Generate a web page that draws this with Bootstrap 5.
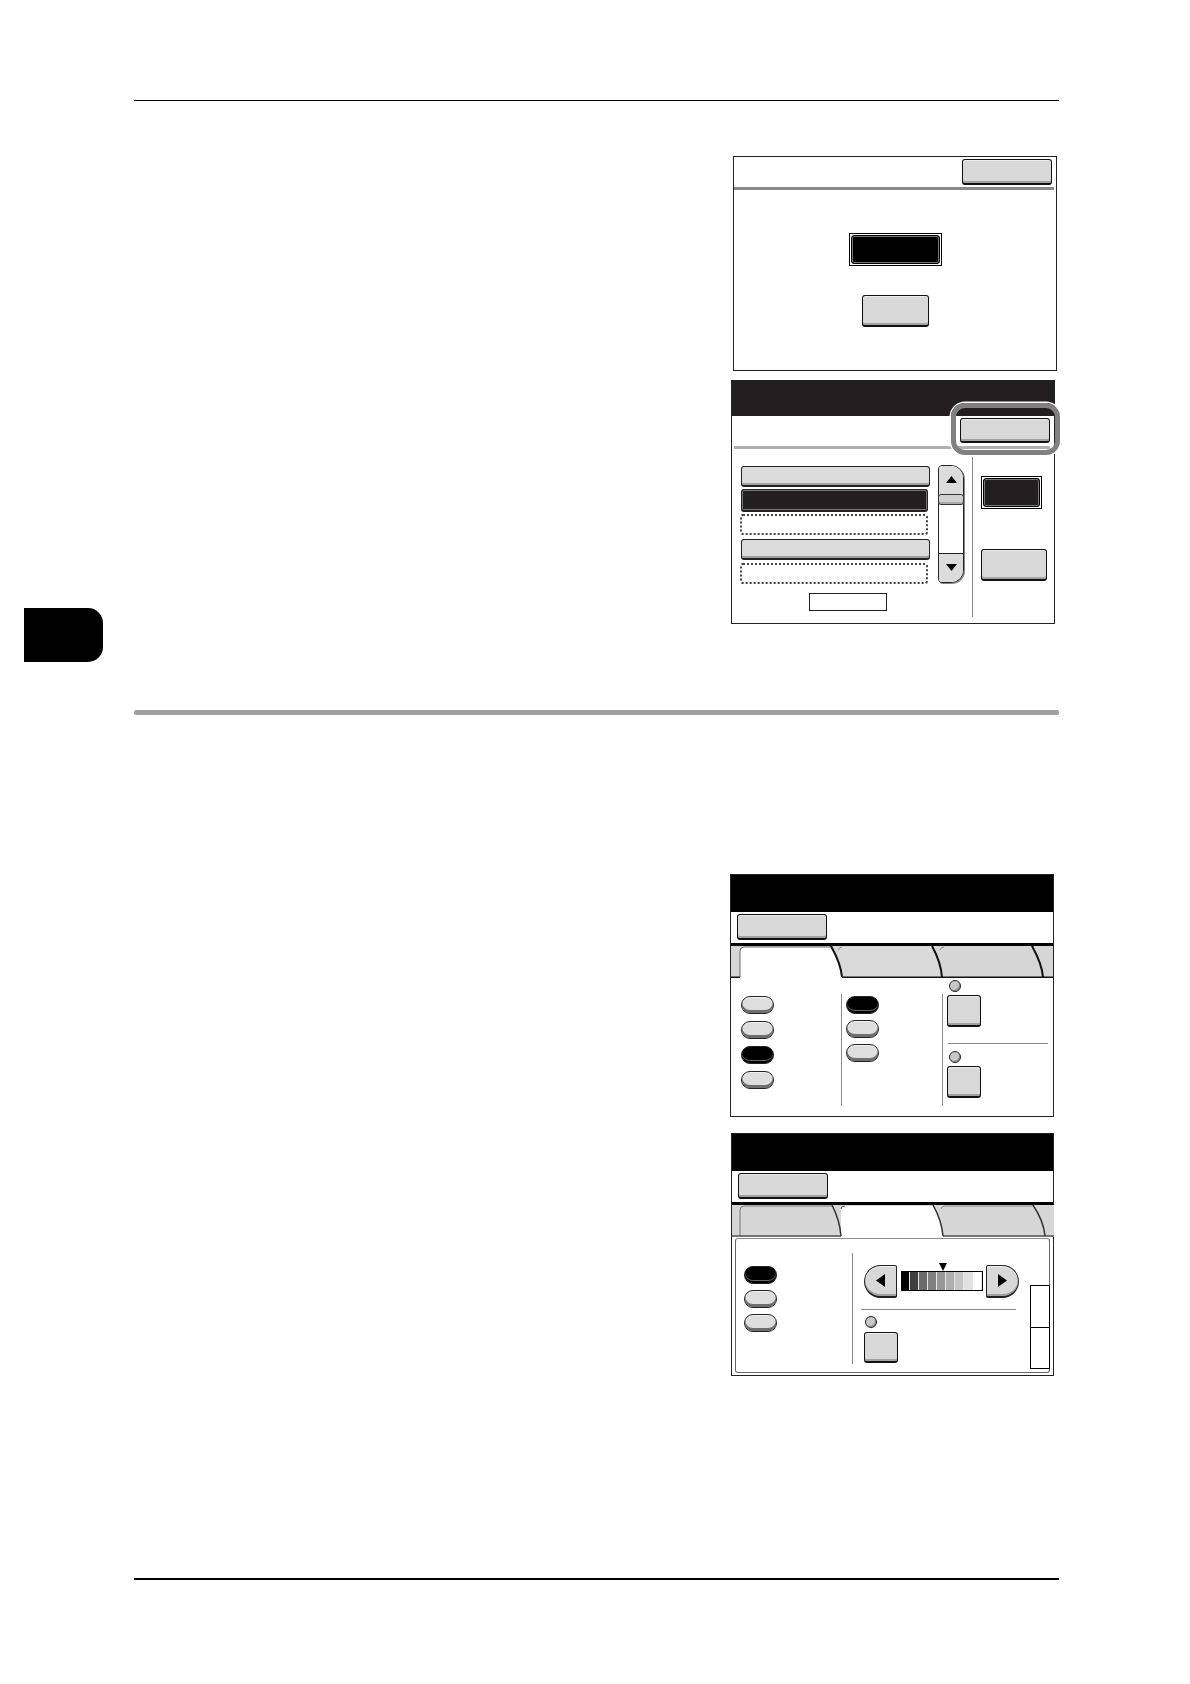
<!DOCTYPE html>
<html lang="en">
<head>
<meta charset="utf-8">
<title>Manual page</title>
<link rel="stylesheet" href="https://cdn.jsdelivr.net/npm/bootstrap@5.3.0/dist/css/bootstrap.min.css">
<style>
body{margin:0;background:#fff;height:1684px;overflow:hidden;font-family:"Liberation Sans",sans-serif}
.gutter{width:134px;padding-left:24px;flex:none}
.thumbtab{width:79px;height:54px;margin-top:607.5px;background:#000;border-radius:0 15px 15px 0}
.sheet{width:925px;flex:none}
.rule-thin{height:1.5px;background:#000}
.rule-top{margin-top:99.5px}
.rule-bottom{margin-top:202px}
.rule-thick{height:5px;margin-top:86.5px;background:#a0a0a0;border-radius:2px}

.screen{position:relative;width:324px;background:#fff;border:1px solid #222;flex:none}
.s1{margin:54.5px 0 0 599px;height:215.5px}
.s2{margin:8.5px 0 0 597px;height:244px}
.s3{margin:159px 0 0 596px;height:243px}
.s4{margin:16px 0 0 597px;width:323px;height:243px}
.s2 .titlebar{height:35px;background:#231f20}
.s3 .titlebar,.s4 .titlebar{height:37px;background:#000}
.s2,.s3,.s4{border-left-width:1.5px}

.uibtn{display:block;padding:0;background:#d8d8d8;border:1.5px solid #111;border-bottom-width:2px;border-radius:3px;box-shadow:inset 0 -2px 0 #a2a2a2,inset 0 1px 0 #ececec}
.w90{width:90px;height:25.5px}
.sepbar{height:3px;background:#8a8a8a}
.s1 .sepbar{margin:2px 2px 0 0}
.s2 .sepbar{background:#b0b0b0;margin:2.5px 4px 0 2px}
.s1-top{padding:2.5px 4px 0 0}
.s2-top{padding:2px 4px 0 0}

.sel{background:#fff;border:1px solid #000;padding:1px}
.sel-in{display:block;width:100%;height:100%;background:#000;border:1px solid #000;border-radius:3px;box-shadow:inset 0 0 0 1px #777}
.s2 .sel-in{background:#231f20}
.sel-s1{width:93px;height:33px;margin-top:43.5px}
.gray-s1{width:67px;height:31.5px;margin-top:29px}

.lst{width:190px;margin-left:8px;margin-top:17px}
.lrow{height:21px;margin-left:1px;width:189px;background:#dcdcdc;border:1.5px solid #222;border-bottom-width:2px;border-radius:3px;box-shadow:inset 0 -2px 0 #a2a2a2}
.lrow-on{width:187px;height:22.5px;margin-top:2.5px;background:#231f20;box-shadow:inset 0 0 0 1px #777}
.lrow-empty{width:188px;margin-left:0;margin-top:2px;background:#fff;border:2px dotted #444;box-shadow:none}
.mt45{margin-top:4px}
.mt4{margin-top:3.5px}
.pagebox{width:78px;height:18px;margin:8.5px 0 0 69px;border:1px solid #222}

.scrl{width:26px;height:118px;margin:16px 0 0 8px;background:#fff;border:1.5px solid #222;border-radius:4px 13px 13px 4px;box-shadow:1px 1px 0 #888}
.scrl-cap{height:28px;background:#dcdcdc;border-radius:3px 12px 0 0}
.scrl-cap-b{height:29px;border-radius:0 0 12px 3px;border-top:1px solid #222}
.scrl-thumb{height:11px;margin:0 -1px;background:#d0d0d0;border:1px solid #333;border-radius:3px;box-shadow:inset 0 -2px 0 #aaa}
.vline{width:1px;background:#888;flex:none}
.v2{height:160px;margin:8.5px 0 0 7.5px}
.rcol{margin-left:8.5px}
.sel-s2{width:61px;height:33px;margin-top:27px}
.gray-s2{width:66px;height:31.5px;margin-top:40.5px}

.ring{position:absolute;left:218.5px;top:22.5px;width:109px;height:52px;border:5.5px solid #808080;border-radius:14px;box-shadow:0 0 0 1.5px #fff}

.tabrow{display:block;width:322px;height:32px}
.blackline{height:3px;background:#000}
.barrow{height:30.5px;padding:2px 0 0 6px}

.oval{display:block;width:33px;height:18px;background:#dedede;border:1.5px solid #222;border-radius:9px;box-shadow:inset 0 -3px 0 #6e6e6e,inset 0 1px 0 #f2f2f2}
.oval-on{background:#000;box-shadow:inset 0 -2px 0 #000,inset 0 -3px 0 #666}
.dotlamp{display:block;width:12px;height:12px;background:#c8c8c8;border:1px solid #222;border-radius:50%;box-shadow:inset -1px -1px 0 #888}
.sq{width:34px;height:32px}
.c1{width:110px;padding:18px 0 0 10px;flex:none}
.c1 .oval+.oval{margin-top:7px}
.v3a{height:112px;margin-top:16.5px}
.c2{width:100px;padding:18.5px 0 0 3.5px;flex:none}
.c2 .oval+.oval{margin-top:6px}
.c3{padding-top:2px;flex:1}
.c3 .dotlamp{margin-left:5.5px}
.c3 .sq{margin:3px 0 0 4px}
.hr3{height:1px;background:#888;margin:16px 5px 0 4.5px}
.c3 .dotlamp.second{margin-top:7px}

.frame{position:relative;height:135px;margin:1px 3.5px 0 2.5px;border:1px solid #666;border-top:1.5px solid #8c8c8c;border-radius:3px}
.f1{width:116px;padding:27px 0 0 8px;flex:none}
.f1 .oval+.oval{margin-top:6px}
.v4{height:111px;margin-top:14.5px}
.f2{width:155px;margin-left:8px;padding-top:26px;flex:none}
.scalebar{padding-left:3px}
.arrowbtn{width:33px;height:33px;padding:0;background:#d8d8d8;border:1.5px solid #222;border-bottom-width:2.5px;box-shadow:inset 0 -2px 0 #a2a2a2,inset 0 1px 0 #f2f2f2;flex:none}
.arrow-l{border-radius:17px 2px 2px 17px}
.arrow-r{border-radius:2px 17px 17px 2px;margin-left:3px}
.dens{position:relative;width:82px;height:20px;margin-left:4px;border:1px solid #000;background:#fff;flex:none}
.cell{flex:1;border-right:1px solid #e4e4e4}
.cell:last-child{border-right:0}
.g0{background:#000}.g1{background:#3f3f3f}.g2{background:#6b6b6b}.g3{background:#808080}.g4{background:#979797}.g5{background:#aeaeae}.g6{background:#c6c6c6}.g7{background:#e2e2e2}.g8{background:#fff}
.marker{position:absolute;left:37px;top:-9px;display:block}
.hr4{height:1px;background:#888;margin-top:11px}
.f2 .dotlamp{margin:6px 0 0 4px}
.f2 .sq{width:34px;height:31px;margin:4px 0 0 3px}
.stack{width:20px;margin:46.5px -1px 0 auto;flex:none}
.stackbox{height:42.5px;background:#fff;border:1px solid #000}
.stackbox+.stackbox{margin-top:-1px}
</style>
</head>
<body>
<div class="d-flex">
  <div class="gutter"><div class="thumbtab"></div></div>
  <div class="sheet">
    <div class="rule-thin rule-top"></div>

    <!-- screen 1 -->
    <div class="screen s1">
      <div class="d-flex justify-content-end s1-top"><button type="button" class="btn uibtn w90"></button></div>
      <div class="sepbar"></div>
      <div class="d-flex flex-column align-items-center">
        <div class="sel sel-s1"><span class="sel-in"></span></div>
        <button type="button" class="btn uibtn gray-s1"></button>
      </div>
    </div>

    <!-- screen 2 -->
    <div class="screen s2">
      <div class="titlebar"></div>
      <div class="d-flex justify-content-end s2-top"><button type="button" class="btn uibtn w90"></button></div>
      <div class="sepbar"></div>
      <div class="d-flex">
        <div class="lst d-flex flex-column">
          <div class="lrow"></div>
          <div class="lrow lrow-on"></div>
          <div class="lrow lrow-empty"></div>
          <div class="lrow mt45"></div>
          <div class="lrow lrow-empty mt4"></div>
          <div class="pagebox"></div>
        </div>
        <div class="scrl d-flex flex-column">
          <div class="scrl-cap d-flex align-items-center justify-content-center"><svg width="11" height="7" viewBox="0 0 11 7"><path d="M5.5 0L11 7H0Z" fill="#000"/></svg></div>
          <div class="scrl-thumb"></div>
          <div class="flex-fill"></div>
          <div class="scrl-cap scrl-cap-b d-flex align-items-center justify-content-center"><svg width="11" height="7" viewBox="0 0 11 7"><path d="M0 0H11L5.5 7Z" fill="#000"/></svg></div>
        </div>
        <div class="vline v2"></div>
        <div class="rcol">
          <div class="sel sel-s2"><span class="sel-in"></span></div>
          <button type="button" class="btn uibtn gray-s2"></button>
        </div>
      </div>
      <div class="ring"></div>
    </div>

    <div class="rule-thick"></div>

    <!-- screen 3 -->
    <div class="screen s3">
      <div class="titlebar"></div>
      <div class="barrow"><button type="button" class="btn uibtn w90"></button></div>
      <div class="blackline"></div>
      <svg class="tabrow" viewBox="0 0 322 32" aria-hidden="true">
        <rect width="322" height="32" fill="#d6d6d6"/>
        <path d="M107 31V3Q108 1 112 1H202C207 9 211 19 212 31Z" fill="#dadada"/>
        <path d="M107.5 4Q108 1 111 1" fill="none" stroke="#888" stroke-width="1"/>
        <path d="M209 4Q210 1 213 1" fill="none" stroke="#888" stroke-width="1"/>
        <path d="M9 32V5Q9 1 13 1H100C105 9 110 19 111 32Z" fill="#fff"/>
        <path d="M9 31V5Q9 1 13 1H100" fill="none" stroke="#666" stroke-width="1"/>
        <path d="M0 31.2H9M111 31.2H322" stroke="#111" stroke-width="1.5"/>
        <path d="M100 0C105 9 110 19 111 31M201 0C206 9 210 19 211 31M301 0C306 9 311 19 312 31" fill="none" stroke="#111" stroke-width="2"/>
      </svg>
      <div class="d-flex">
        <div class="c1"><span class="oval"></span><span class="oval"></span><span class="oval oval-on"></span><span class="oval"></span></div>
        <div class="vline v3a"></div>
        <div class="c2"><span class="oval oval-on"></span><span class="oval"></span><span class="oval"></span></div>
        <div class="vline v3a"></div>
        <div class="c3">
          <span class="dotlamp"></span>
          <button type="button" class="btn uibtn sq"></button>
          <div class="hr3"></div>
          <span class="dotlamp second"></span>
          <button type="button" class="btn uibtn sq"></button>
        </div>
      </div>
    </div>

    <!-- screen 4 -->
    <div class="screen s4">
      <div class="titlebar"></div>
      <div class="barrow"><button type="button" class="btn uibtn w90"></button></div>
      <div class="blackline"></div>
      <svg class="tabrow" viewBox="0 0 322 32" aria-hidden="true">
        <rect width="322" height="32" fill="#d6d6d6"/>
        <path d="M8 31V5Q8 1 12 1H100" fill="none" stroke="#777" stroke-width="1"/>
        <path d="M209 4Q210 1 213 1H301" fill="none" stroke="#888" stroke-width="1"/>
        <path d="M109 32V5Q109 1 113 1H201C206 9 210 19 211 32Z" fill="#fff"/>
        <path d="M109 4Q109 1 113 1" fill="none" stroke="#555" stroke-width="1"/>
        <path d="M0 31H109M211 31H322" stroke="#555" stroke-width="1.5"/>
        <path d="M100 0C104 8 108 18 109 31M201 0C206 9 210 19 211 31M301 0C307 9 312 19 313 31" fill="none" stroke="#333" stroke-width="1.5"/>
      </svg>
      <div class="frame d-flex">
        <div class="f1"><span class="oval oval-on"></span><span class="oval"></span><span class="oval"></span></div>
        <div class="vline v4"></div>
        <div class="f2">
          <div class="scalebar d-flex align-items-center">
            <button type="button" class="btn arrowbtn arrow-l d-flex align-items-center justify-content-center"><svg width="9" height="13" viewBox="0 0 9 13"><path d="M9 0V13L0 6.5Z" fill="#000"/></svg></button>
            <div class="dens d-flex">
              <span class="cell g0"></span><span class="cell g1"></span><span class="cell g2"></span><span class="cell g3"></span><span class="cell g4"></span><span class="cell g5"></span><span class="cell g6"></span><span class="cell g7"></span><span class="cell g8"></span>
              <svg class="marker" width="8" height="8" viewBox="0 0 8 8"><path d="M0 0H8L4 8Z" fill="#000"/></svg>
            </div>
            <button type="button" class="btn arrowbtn arrow-r d-flex align-items-center justify-content-center"><svg width="9" height="13" viewBox="0 0 9 13"><path d="M0 0V13L9 6.5Z" fill="#000"/></svg></button>
          </div>
          <div class="hr4"></div>
          <span class="dotlamp"></span>
          <button type="button" class="btn uibtn sq"></button>
        </div>
        <div class="stack"><div class="stackbox"></div><div class="stackbox"></div></div>
      </div>
    </div>

    <div class="rule-thin rule-bottom"></div>
  </div>
</div>
<script src="https://cdn.jsdelivr.net/npm/bootstrap@5.3.0/dist/js/bootstrap.bundle.min.js"></script>
</body>
</html>
